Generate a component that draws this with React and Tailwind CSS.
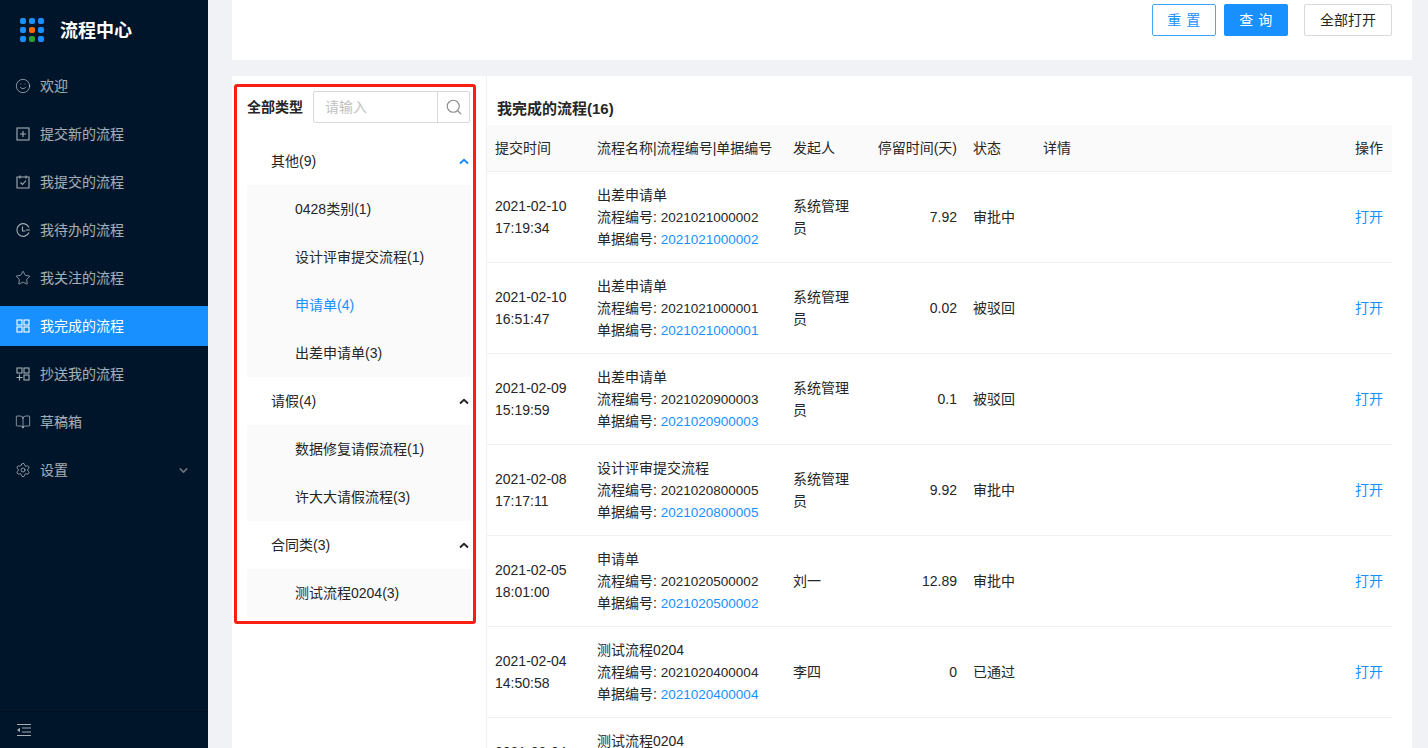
import { ChevronDown, Search, Smile, Star, BookOpen, Settings } from 'lucide-react'

const FONT = "font-['Liberation_Sans','Noto_Sans_CJK_SC',sans-serif]"

function Glyph({ children }) {
  return (
    <svg width="16" height="16" viewBox="0 0 16 16" fill="none" stroke="currentColor" strokeWidth="1.1">
      {children}
    </svg>
  )
}

const menu = [
  { label: '欢迎', icon: <Smile size={16} strokeWidth={1.2} /> },
  {
    label: '提交新的流程',
    icon: (
      <Glyph>
        <rect x="2" y="2" width="12" height="12" />
        <path d="M5 8h6M8 5v6" />
      </Glyph>
    ),
  },
  {
    label: '我提交的流程',
    icon: (
      <Glyph>
        <path d="M2 3h12v11H2zM5 1.5v3M11 1.5v3" />
        <path d="M5.5 8.5l2 2 3.5-4" />
      </Glyph>
    ),
  },
  {
    label: '我待办的流程',
    icon: (
      <Glyph>
        <path d="M14 10.5A6.3 6.3 0 1 1 14 5.5" />
        <path d="M7.5 4.5V9h3M11 8h4" />
      </Glyph>
    ),
  },
  { label: '我关注的流程', icon: <Star size={16} strokeWidth={1.2} /> },
  {
    label: '我完成的流程',
    icon: (
      <Glyph>
        <rect x="2" y="2" width="5" height="5" />
        <rect x="9" y="2" width="5" height="5" />
        <rect x="2" y="9" width="5" height="5" />
        <rect x="9" y="9" width="5" height="5" />
      </Glyph>
    ),
    active: true,
  },
  {
    label: '抄送我的流程',
    icon: (
      <Glyph>
        <rect x="2" y="2" width="5" height="5" />
        <rect x="9" y="2" width="5" height="5" />
        <rect x="9" y="9" width="5" height="5" />
        <path d="M1.5 11.5h6M4.5 8.5v6" />
      </Glyph>
    ),
  },
  { label: '草稿箱', icon: <BookOpen size={16} strokeWidth={1.2} /> },
  { label: '设置', icon: <Settings size={16} strokeWidth={1.2} />, arrow: true },
]

const tree = [
  { name: '其他(9)', open: true, items: ['0428类别(1)', '设计评审提交流程(1)', '申请单(4)', '出差申请单(3)'] },
  { name: '请假(4)', items: ['数据修复请假流程(1)', '许大大请假流程(3)'] },
  { name: '合同类(3)', items: ['测试流程0204(3)'] },
]

const rows = [
  ['2021-02-10', '17:19:34', '出差申请单', '2021021000002', '系统管理员', '7.92', '审批中'],
  ['2021-02-10', '16:51:47', '出差申请单', '2021021000001', '系统管理员', '0.02', '被驳回'],
  ['2021-02-09', '15:19:59', '出差申请单', '2021020900003', '系统管理员', '0.1', '被驳回'],
  ['2021-02-08', '17:17:11', '设计评审提交流程', '2021020800005', '系统管理员', '9.92', '审批中'],
  ['2021-02-05', '18:01:00', '申请单', '2021020500002', '刘一', '12.89', '审批中'],
  ['2021-02-04', '14:50:58', '测试流程0204', '2021020400004', '李四', '0', '已通过'],
  ['2021-02-04', '14:50:21', '测试流程0204', '2021020400003', '李四', '0', '已通过'],
]

const COLS = 'grid grid-cols-[102px_196px_85px_95px_70px_1fr_60px]'

function Sidebar() {
  return (
    <aside className="w-[208px] h-[748px] shrink-0 bg-[#001529] flex flex-col">
      <div className="h-[62px] flex items-center pl-[20px] gap-[16px]">
        <div className="grid grid-cols-3 gap-[3px] -mt-[2px]">
          {['#1890ff', '#1890ff', '#1890ff', '#1890ff', '#f56a00', '#1890ff', '#1890ff', '#2ca02c', '#1890ff'].map((c, i) => (
            <span key={i} className="w-[6px] h-[6px] rounded-[2px]" style={{ backgroundColor: c }} />
          ))}
        </div>
        <span className="text-white text-[18px] font-semibold leading-none">流程中心</span>
      </div>
      <nav className="flex-1 pt-[4px]">
        {menu.map((m) => (
          <div
            key={m.label}
            className={`h-[40px] mb-[8px] flex items-center pl-[15px] pr-[18px] gap-[9px] text-[14px] ${m.active ? 'bg-[#1890ff] text-white' : 'text-white/65'}`}
          >
            {m.icon}
            <span className="flex-1">{m.label}</span>
            {m.arrow && <ChevronDown size={13} strokeWidth={3} className="text-white/40" />}
          </div>
        ))}
      </nav>
      <div className="h-[37px] border-t border-[#00101f] flex items-center pl-[16px]">
        <svg width="16" height="14" viewBox="0 0 16 14" fill="none" className="text-white/65">
          <path d="M1 1.5h14M6 5h9M6 9h9M1 12.5h14" stroke="currentColor" strokeWidth="1" />
          <path d="M1 7l3-2.2v4.4z" fill="currentColor" />
        </svg>
      </div>
    </aside>
  )
}

function TreeNav() {
  return (
    <div className="relative w-[255px] shrink-0 border-r border-[#f0f0f0] pl-[15px] pr-[15px] pt-[15px]">
      <div className="flex items-center justify-between h-[32px] pr-[1px]">
        <span className="text-[14px] font-semibold text-[#262626]">全部类型</span>
        <div className="w-[157px] h-[32px] flex border border-[#d9d9d9] rounded-[2px]">
          <span className="flex-1 pl-[11px] text-[14px] leading-[30px] text-[#bfbfbf]">请输入</span>
          <span className="w-[32px] border-l border-[#d9d9d9] flex items-center justify-center text-[#8c8c8c]">
            <Search size={18} strokeWidth={1.5} />
          </span>
        </div>
      </div>
      <div className="mt-[14px]">
        {tree.map((g) => (
          <div key={g.name}>
            <div className="h-[48px] flex items-center justify-between pl-[24px] pr-[2px] text-[14px] text-[#262626]">
              <span>{g.name}</span>
              <svg width="10" height="7" viewBox="0 0 10 7" className={g.open ? 'text-[#1890ff]' : 'text-[#262626]'}>
                <path d="M1 5.5L5 1.8l4 3.7" fill="none" stroke="currentColor" strokeWidth="2" />
              </svg>
            </div>
            <div className="bg-[#fafafa]">
              {g.items.map((it) => (
                <div key={it} className={`h-[48px] flex items-center pl-[48px] text-[14px] ${it === '申请单(4)' ? 'text-[#1890ff]' : 'text-[#262626]'}`}>
                  {it}
                </div>
              ))}
            </div>
          </div>
        ))}
      </div>
      <div className="absolute left-[2px] top-[8px] w-[242px] h-[540px] border-[3px] border-[#fa1e14] rounded-[3px] pointer-events-none" />
    </div>
  )
}

function ProcessTable() {
  return (
    <div className="flex-1 min-w-0 pr-[20px] text-[14px] text-[#262626]">
      <div className="h-[49px] pl-[10px] pt-[22px] text-[15px] leading-[22px] font-semibold">我完成的流程(16)</div>
      <div className={`${COLS} h-[47px] items-center bg-[#fafafa] border-b border-[#f0f0f0]`}>
        <span className="pl-[8px]">提交时间</span>
        <span className="pl-[8px] whitespace-nowrap">流程名称|流程编号|单据编号</span>
        <span className="pl-[8px]">发起人</span>
        <span className="pr-[8px] text-right whitespace-nowrap">停留时间(天)</span>
        <span className="pl-[8px]">状态</span>
        <span className="pl-[8px]">详情</span>
        <span className="pr-[9px] text-right">操作</span>
      </div>
      {rows.map((r) => (
        <div key={r[3]} className={`${COLS} h-[91px] items-center border-b border-[#f0f0f0] leading-[22px]`}>
          <div className="pl-[8px]">{r[0]}<br />{r[1]}</div>
          <div className="pl-[8px] whitespace-nowrap">
            <div className="h-[22px]">{r[2]}</div>
            <div className="h-[22px]">流程编号: <span className="text-[13.5px]">{r[3]}</span></div>
            <div className="h-[22px]">单据编号: <span className="text-[13.5px] text-[#1890ff]">{r[3]}</span></div>
          </div>
          <div className="px-[8px]">{r[4]}</div>
          <div className="pr-[8px] text-right">{r[5]}</div>
          <div className="pl-[8px]">{r[6]}</div>
          <div />
          <div className="pr-[9px] text-right text-[#1890ff]">打开</div>
        </div>
      ))}
    </div>
  )
}

export default function App() {
  return (
    <div className={`${FONT} w-[1428px] h-[748px] overflow-hidden flex bg-[#f0f2f5]`}>
      <Sidebar />
      <main className="flex-1 min-w-0 pl-[24px] pr-[16px] flex flex-col gap-[16px]">
        <div className="h-[60px] shrink-0 bg-white pt-[4px] pr-[20px] flex justify-end text-[14px]">
          <button className="w-[64px] h-[32px] border border-[#40a9ff] rounded-[2px] text-[#1890ff] mr-[8px] tracking-[0.5px]">重 置</button>
          <button className="w-[64px] h-[32px] bg-[#1890ff] rounded-[2px] text-white mr-[16px] tracking-[0.5px]">查 询</button>
          <button className="w-[88px] h-[32px] border border-[#d9d9d9] rounded-[2px] text-[#262626]">全部打开</button>
        </div>
        <div className="flex-1 min-h-0 bg-white flex overflow-hidden">
          <TreeNav />
          <ProcessTable />
        </div>
      </main>
    </div>
  )
}
